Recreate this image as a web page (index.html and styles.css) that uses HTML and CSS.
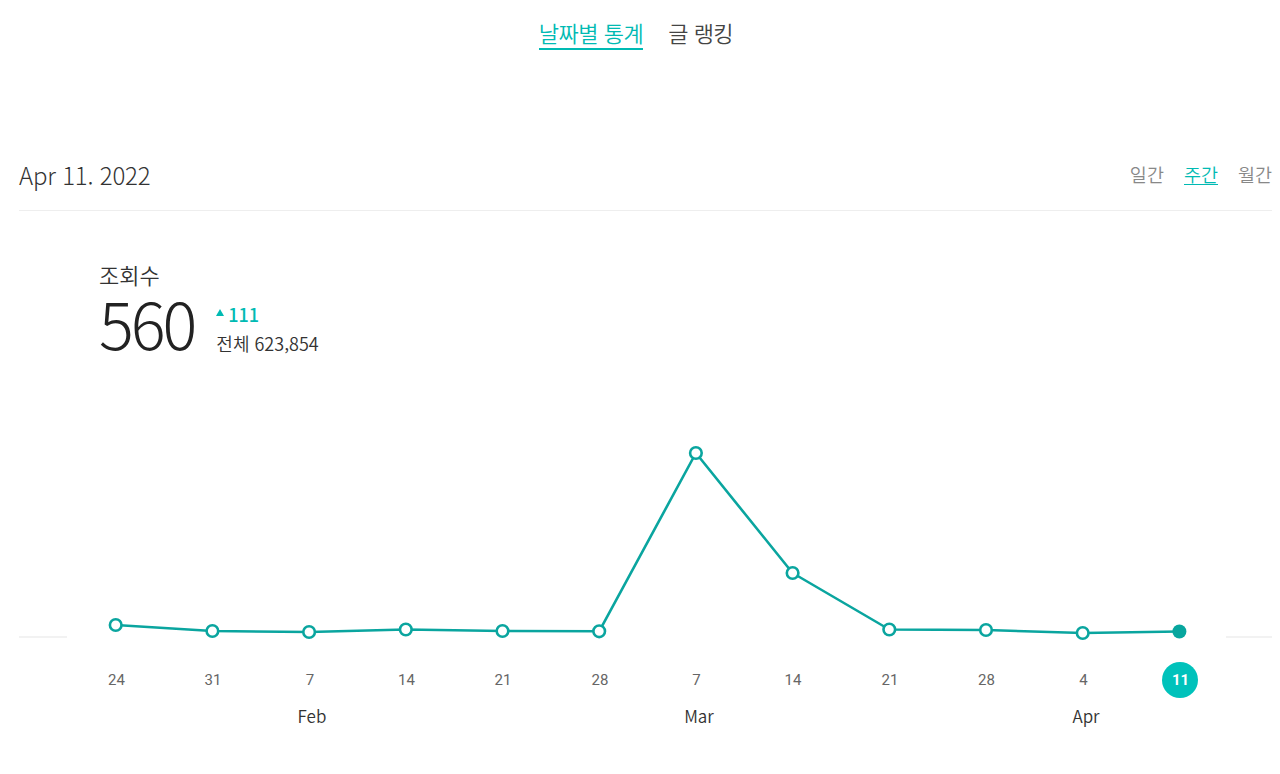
FILE: index.html
```html
<!DOCTYPE html>
<html lang="ko">
<head>
<meta charset="utf-8">
<title>통계</title>
<link rel="stylesheet" href="styles.css">
</head>
<body>
<nav class="tabs">
  <a class="tab active">날짜별 통계</a>
  <a class="tab">글 랭킹</a>
</nav>
<main class="page">
  <header class="head">
    <h1 class="date">Apr 11. 2022</h1>
    <div class="periods">
      <a class="period">일간</a>
      <a class="period active">주간</a>
      <a class="period">월간</a>
    </div>
  </header>
  <section class="stats">
    <div class="label">조회수</div>
    <div class="row">
      <div class="big">560</div>
      <div class="side">
        <div class="delta"><span class="tri"></span>111</div>
        <div class="total">전체 623,854</div>
      </div>
    </div>
  </section>
  <svg class="chart" width="1253" height="380" viewBox="19 380 1253 380">
    <line x1="19" y1="637" x2="67" y2="637" class="base"/>
    <line x1="1226" y1="637" x2="1272" y2="637" class="base"/>
    <polyline class="trend" points="115.7,625 212.4,631 309.1,632 405.8,629.5 502.5,631 599.2,631.3 695.9,453 792.6,573 889.3,629.5 986,630 1082.7,633 1179.4,631.5"/>
    <g class="dot">
      <circle cx="115.7" cy="625" r="5.8"/>
      <circle cx="212.4" cy="631" r="5.8"/>
      <circle cx="309.1" cy="632" r="5.8"/>
      <circle cx="405.8" cy="629.5" r="5.8"/>
      <circle cx="502.5" cy="631" r="5.8"/>
      <circle cx="599.2" cy="631.3" r="5.8"/>
      <circle cx="695.9" cy="453" r="5.8"/>
      <circle cx="792.6" cy="573" r="5.8"/>
      <circle cx="889.3" cy="629.5" r="5.8"/>
      <circle cx="986" cy="630" r="5.8"/>
      <circle cx="1082.7" cy="633" r="5.8"/>
    </g>
    <circle class="dot-last" cx="1179.4" cy="631.5" r="7"/>
    <circle class="today" cx="1180" cy="680" r="18"/>
    <g class="day">
      <text x="116.5" y="685">24</text>
      <text x="213" y="685">31</text>
      <text x="310" y="685">7</text>
      <text x="406.5" y="685">14</text>
      <text x="503" y="685">21</text>
      <text x="600" y="685">28</text>
      <text x="696.5" y="685">7</text>
      <text x="793" y="685">14</text>
      <text x="890" y="685">21</text>
      <text x="986.5" y="685">28</text>
      <text x="1083.5" y="685">4</text>
    </g>
    <text class="today-num" x="1180.5" y="685">11</text>
    <g class="month">
      <text x="312" y="723">Feb</text>
      <text x="699" y="723">Mar</text>
      <text x="1086" y="723">Apr</text>
    </g>
  </svg>
</main>
</body>
</html>
```
FILE: styles.css
```css
* { box-sizing: border-box; }
html, body { margin: 0; padding: 0; background: #fff; }
body {
  font-family: "Noto Sans CJK KR", "Noto Sans", sans-serif;
  color: #333;
  width: 1280px;
  height: 774px;
  overflow: hidden;
}
.tabs {
  display: flex;
  justify-content: center;
  gap: 25px;
  padding-top: 16px;
  padding-right: 8px;
}
.tab {
  font-size: 22px;
  font-weight: 350;
  line-height: 32px;
  color: #444;
  border-bottom: 2px solid transparent;
  letter-spacing: -0.5px;
}
.tab.active {
  color: #00bab3;
  border-bottom-color: #00bab3;
}
.page {
  margin-left: 19px;
  width: 1253px;
}
.head {
  margin-top: 100px;
  height: 61px;
  padding-bottom: 11px;
  display: flex;
  align-items: center;
  justify-content: space-between;
  border-bottom: 1px solid #eeeeee;
}
.date {
  margin: 0;
  font-size: 24px;
  font-weight: 300;
  color: #333;
  letter-spacing: -0.2px;
}
.periods {
  display: flex;
  gap: 20px;
}
.period {
  font-size: 18.5px;
  font-weight: 350;
  line-height: 19px;
  color: #888;
  border-bottom: 1.5px solid transparent;
}
.period.active {
  color: #00bab3;
  border-bottom-color: #00bab3;
}
.stats {
  height: 169px;
  padding: 48px 0 0 80px;
}
.label {
  font-size: 22px;
  font-weight: 350;
  line-height: 30px;
  color: #333;
}
.row {
  display: flex;
  align-items: flex-start;
  gap: 22px;
}
.big {
  font-size: 65px;
  font-weight: 300;
  line-height: 66px;
  color: #222;
  letter-spacing: -3px;
}
.side {
  padding-top: 14px;
}
.delta {
  display: flex;
  align-items: center;
  gap: 4px;
  color: #00bab3;
  font-size: 18px;
  font-weight: 500;
  line-height: 22px;
}
.tri {
  width: 0;
  height: 0;
  border-left: 4.5px solid transparent;
  border-right: 4.5px solid transparent;
  border-bottom: 7px solid #00bab3;
  margin-top: -3px;
}
.total {
  margin-top: 7px;
  font-size: 18px;
  font-weight: 350;
  line-height: 22px;
  color: #333;
}
.chart {
  display: block;
}
.base {
  stroke: #eeeeee;
  stroke-width: 1.5;
}
.trend {
  fill: none;
  stroke: #0aa59f;
  stroke-width: 2.6;
  stroke-linejoin: round;
}
.dot circle {
  fill: #fff;
  stroke: #0aa59f;
  stroke-width: 2.6;
}
.dot-last { fill: #07a69e; }
.today { fill: #00c2bb; }
.day text {
  font-family: Roboto, "Liberation Sans", sans-serif;
  font-size: 15px;
  fill: #666;
  text-anchor: middle;
}
.today-num {
  font-family: Roboto, "Liberation Sans", sans-serif;
  font-size: 15px;
  font-weight: 700;
  fill: #fff;
  text-anchor: middle;
}
.month text {
  font-family: "Noto Sans CJK KR", "Noto Sans", sans-serif;
  font-size: 17px;
  font-weight: 350;
  fill: #333;
  text-anchor: middle;
}
```
